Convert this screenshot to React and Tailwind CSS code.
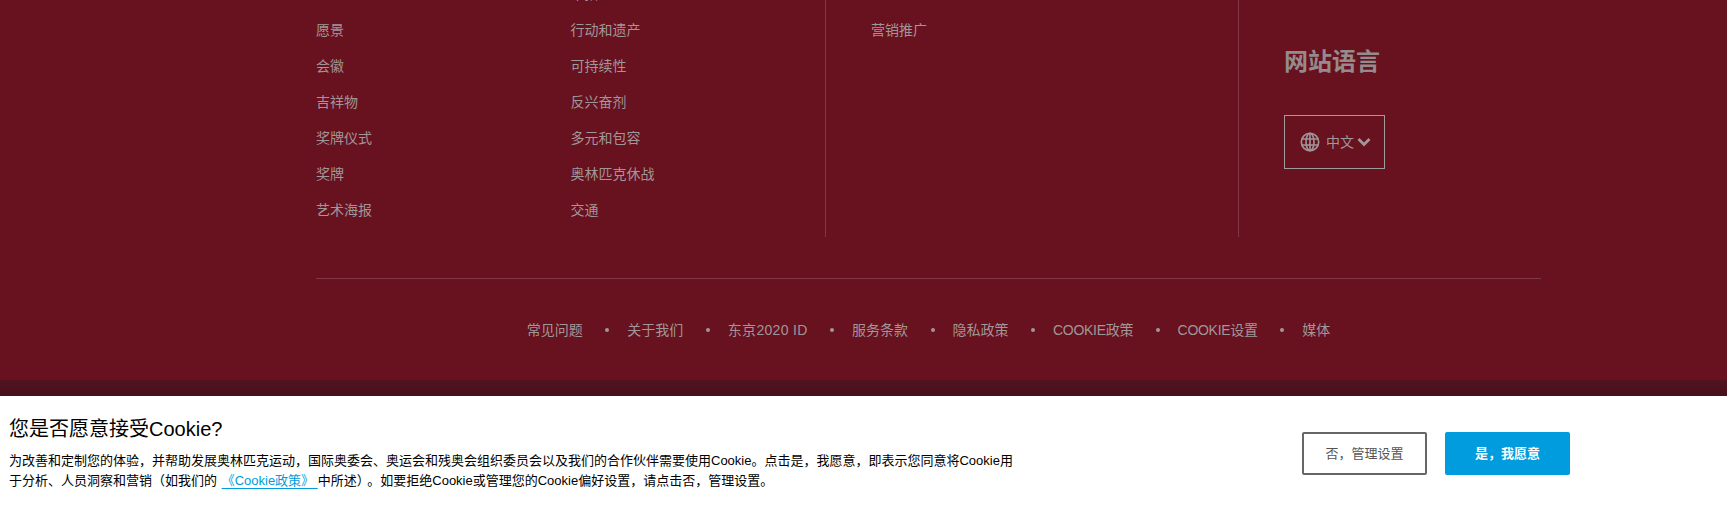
const col1 = ["愿景", "会徽", "吉祥物", "奖牌仪式", "奖牌", "艺术海报"];
const col2 = ["行动和遗产", "可持续性", "反兴奋剂", "多元和包容", "奥林匹克休战", "交通"];
const bottomLinks = ["常见问题", "关于我们", "东京2020 ID", "服务条款", "隐私政策", "COOKIE政策", "COOKIE设置", "媒体"];

const font = "font-['Liberation_Sans','Noto_Sans_CJK_SC',sans-serif]";

// latin in the bottom links sits a bit tighter or looser than the plain font
const linkTracking = (link) => {
  if (link.startsWith("COOKIE")) return "tracking-[-0.3px]";
  if (link.includes("ID")) return "tracking-[0.3px]";
  return "";
};

function LinkList({ items }) {
  return (
    <ul>
      {items.map((item) => (
        <li key={item} className="h-[36px] leading-[36px] text-[14px] text-[#a09799]">
          {item}
        </li>
      ))}
    </ul>
  );
}

export default function App() {
  return (
    <div className={`${font} h-[505px] overflow-hidden flex flex-col bg-[#68111f]`}>
      {/* FOOTER */}
      <div className="h-[380px] shrink-0 pl-[316px] pr-[186px]">
        <div className="flex h-[237px] overflow-hidden">
          <div className="w-[254.500px] -mt-[24px] pt-[36px]">
            <LinkList items={col1} />
          </div>
          <div className="w-[255.500px] -mt-[24px] border-r border-[#7d3a46]">
            <LinkList items={["举措", ...col2]} />
          </div>
          <div className="w-[413px] pl-[45px] pt-[12px] border-r border-[#7d3a46]">
            <LinkList items={["营销推广"]} />
          </div>
          <div className="pl-[45px] pt-[44px]">
            <h3 className="text-[24px] leading-[36px] font-bold text-[#958b8d]">网站语言</h3>
            <button className="mt-[35px] flex items-center w-[101px] h-[54px] pl-[15px] border border-[#a09c9d] text-[14px] text-[#a09799]">
              <svg width="20" height="20" viewBox="0 0 20 20" fill="none" stroke="#a09799" strokeWidth="1.6">
                <circle cx="10" cy="10" r="8.7" />
                <ellipse cx="10" cy="10" rx="4" ry="8.7" />
                <path d="M10 1.3V18.7M2 7H18M2 13H18" />
              </svg>
              <span className="ml-[6px]">中文</span>
              <svg className="ml-[3px]" width="14" height="10" viewBox="0 0 14 10" fill="none" stroke="#a09799" strokeWidth="2.8">
                <path d="M1.500 2L7 7.500L12.500 2" />
              </svg>
            </button>
          </div>
        </div>

        <div className="mt-[41px] border-t border-[#7d3a46]" />

        <div className="mt-[41px] flex justify-center items-center h-[20px] text-[14px] text-[#a09799]">
          {bottomLinks.map((link, i) => (
            <div key={link} className="flex items-center">
              <span className={linkTracking(link)}>{link}</span>
              {i < bottomLinks.length - 1 && (
                <span className="ml-[22.500px] mr-[18px] w-[4px] h-[4px] rounded-full bg-[#a09799]" />
              )}
            </div>
          ))}
        </div>
      </div>

      <div className="h-[16px] shrink-0 bg-gradient-to-b from-[#511420] to-[#47101b]" />

      {/* COOKIE BANNER */}
      <div className="flex-1 bg-white flex justify-between pl-[9px] pr-[157px]">
        <div className="w-[1010px] pt-[21px]">
          <h2 className="text-[20px] leading-[24px] text-black">您是否愿意接受Cookie?</h2>
          <p className="mt-[10px] text-[13px] leading-[20px] text-black">
            为改善和定制您的体验，并帮助发展奥林匹克运动，国际奥委会、奥运会和残奥会组织委员会以及我们的合作伙伴需要使用Cookie。点击是，我愿意，即表示您同意将Cookie用于分析、人员洞察和营销（如我们的{" "}
            <a className="ml-[1px] text-[#009cdd] underline underline-offset-[3px] [text-decoration-skip-ink:none]">《Cookie政策》&nbsp;</a>
            中所述<span className="mr-[4px]">）</span>。如要拒绝Cookie或管理您的Cookie偏好设置，请点击否，管理设置。
          </p>
        </div>
        <div className="flex gap-[18px] pt-[36px]">
          <button className="w-[125px] h-[43px] rounded-[2px] border-2 border-[#666] text-[13px] text-[#555]">
            否，管理设置
          </button>
          <button className="w-[125px] h-[43px] rounded-[2px] bg-[#009cdd] text-[13px] font-bold text-white">
            是，我愿意
          </button>
        </div>
      </div>
    </div>
  );
}
